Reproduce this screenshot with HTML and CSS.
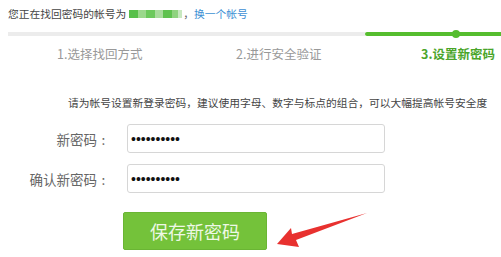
FILE: index.html
```html
<!DOCTYPE html>
<html>
<head>
<meta charset="utf-8">
<title>设置新密码</title>
<link rel="stylesheet" href="styles.css">
</head>
<body>
<div class="page">
  <div class="account">
    <span>您正在找回密码的帐号为</span>
    <span class="mosaic">
      <i class="m1"></i><i class="m2"></i><i class="m3"></i><i class="m4"></i><i class="m5"></i><i class="m6"></i><i class="m7"></i>
    </span>
    <span class="comma">，</span><a class="switch" href="#">换一个帐号</a>
  </div>
  <div class="progress">
    <div class="track"></div>
    <div class="done"><span class="dot"></span></div>
  </div>
  <div class="steps">
    <span class="step s1">1.选择找回方式</span>
    <span class="step s2">2.进行安全验证</span>
    <span class="step s3 current">3.设置新密码</span>
  </div>
  <p class="tip">请为帐号设置新登录密码，建议使用字母、数字与标点的组合，可以大幅提高帐号安全度</p>
  <form class="form">
    <div class="row">
      <label class="label" for="p1">新密码<span class="colon">:</span></label>
      <input class="field" id="p1" type="password" value="abcdefghij">
    </div>
    <div class="row">
      <label class="label" for="p2">确认新密码<span class="colon">:</span></label>
      <input class="field" id="p2" type="password" value="abcdefghij">
    </div>
    <div class="actions">
      <button class="save" type="button">保存新密码</button>
    </div>
  </form>
  <svg class="arrow" width="501" height="257" viewBox="0 0 501 257">
    <polygon points="277,238 291,222 292,228 367,207 296,234 299,241" fill="#e8312f"/>
  </svg>
</div>
</body>
</html>
```

FILE: styles.css
```css
* { box-sizing: border-box; }
html, body { margin: 0; padding: 0; background: #fff; }
body {
  font-family: "Noto Sans CJK SC", sans-serif;
  color: #333;
  width: 501px;
  height: 257px;
  overflow: hidden;
}
.page { position: relative; width: 501px; height: 257px; }

.account {
  display: flex;
  align-items: center;
  height: 16px;
  margin-top: 6px;
  padding-left: 8px;
  font-size: 10.75px;
  color: #444;
  line-height: 16px;
}
.mosaic { display: flex; align-items: center; margin-left: 3px; height: 8px; }
.mosaic i { display: block; height: 8px; }
.m1 { width: 9px; background: #57c04a; }
.m2 { width: 8px; background: #9bd88c; }
.m3 { width: 9px; background: #6cc95c; }
.m4 { width: 8px; background: #a8dc9c; }
.m5 { width: 9px; background: #5fc24f; }
.m6 { width: 6px; background: #8fd37f; }
.m7 { width: 4px; background: #c8e8c0; }
.comma { color: #666; margin-left: 1px; }
.switch { color: #3d8fd4; text-decoration: none; }

.progress {
  display: flex;
  margin-top: 10px;
  margin-left: 8px;
  height: 4px;
}
.track { width: 357px; background: #ececec; }
.done {
  position: relative;
  flex: 1;
  background: #55bd2e;
  border-radius: 2px 0 0 2px;
}
.dot {
  position: absolute;
  left: 87px;
  top: -2px;
  width: 8px;
  height: 8px;
  border-radius: 50%;
  background: #55bd2e;
}

.steps {
  display: flex;
  margin-top: 10px;
  height: 16px;
  line-height: 16px;
  font-size: 12.5px;
  color: #999;
}
.s1 { margin-left: 57px; width: 179px; }
.s2 { width: 185px; }
.s3 { font-weight: bold; color: #4aa52a; }

.tip {
  margin: 34px 0 0 68px;
  font-size: 10.75px;
  line-height: 14px;
  color: #444;
  white-space: nowrap;
}

.form { margin-top: 14px; }
.row {
  display: flex;
  align-items: center;
  gap: 17px;
  margin-bottom: 11px;
}
.label {
  display: flex;
  justify-content: flex-end;
  width: 110px;
  font-size: 13.5px;
  color: #666;
}
.colon { width: 13px; text-align: center; }
.field {
  width: 258px;
  height: 29px;
  border: 1px solid #d6d6d6;
  border-radius: 3px;
  padding: 0 3px;
  font-family: "Liberation Sans", sans-serif;
  font-size: 14px;
  color: #111;
  background: #fff;
  outline: none;
}
.actions { padding-left: 123px; margin-top: 19px; }
.save {
  width: 144px;
  height: 38px;
  border: 1px solid #6ab534;
  border-radius: 2px;
  background: #74c23a;
  color: #eef8e6;
  font-family: "Noto Sans CJK SC", sans-serif;
  font-size: 18px;
  padding: 0;
  cursor: pointer;
}
.arrow { position: absolute; left: 0; top: 0; pointer-events: none; }
```
